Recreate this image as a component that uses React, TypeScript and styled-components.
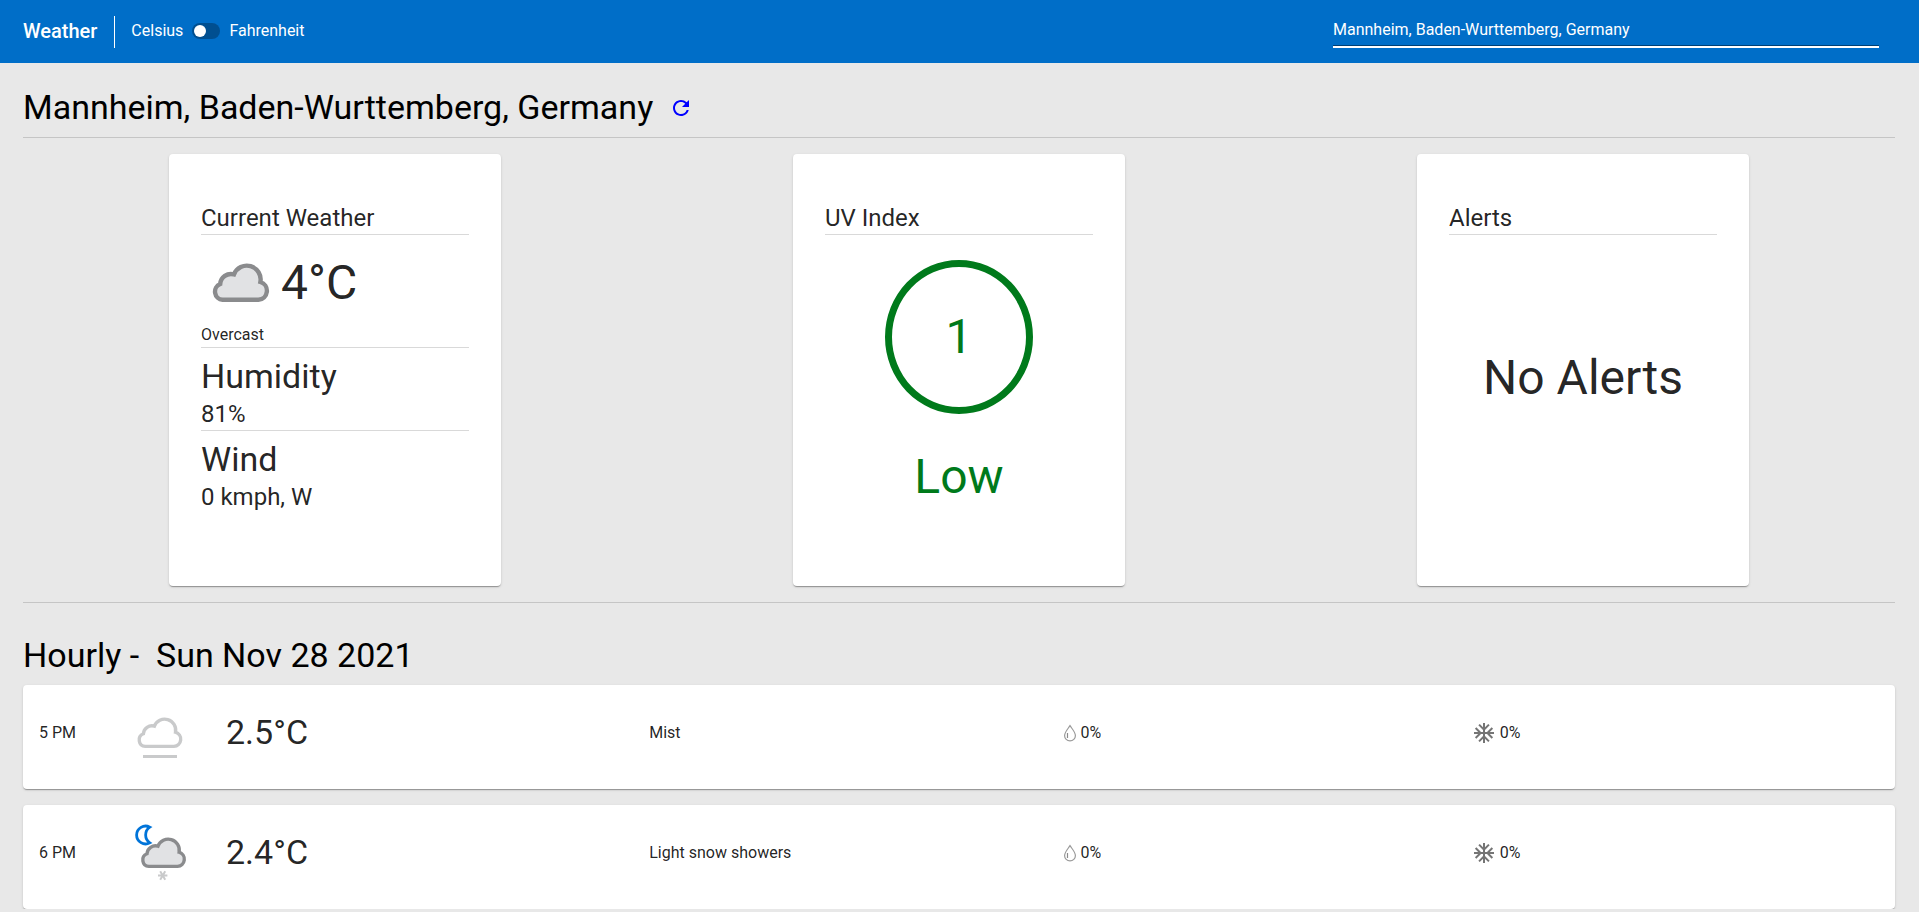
import React, { useState } from "react";
import styled, { createGlobalStyle } from "styled-components";
import { MdAcUnit, MdRefresh } from "react-icons/md";

const GlobalStyle = createGlobalStyle`
  *, *::before, *::after { box-sizing: border-box; }
  body {
    margin: 0;
    background: #e8e8e8;
    color: #000;
    font-family: Roboto, "Liberation Sans", sans-serif;
    font-size: 16px;
    line-height: 24px;
  }
  h1, h2, h3, p { margin: 0; font-weight: 400; }
`;

type TextSize = "small" | "medium" | "large" | "huge";

const textSizes: Record<TextSize, string> = {
  small: "font-size: 16px; line-height: 24px;",
  medium: "font-size: 24px; line-height: 32px;",
  large: "font-size: 34px; line-height: 40px; padding-bottom: 2px;",
  huge: "font-size: 48px; line-height: 56px;",
};

const Text = styled.p<{ $size: TextSize }>`
  ${({ $size }) => textSizes[$size]}
`;

const Header = styled.header`
  display: flex;
  align-items: center;
  height: 63px;
  padding: 0 40px 0 23px;
  background: #006ec8;
  color: #fff;
`;

const Brand = styled.span`
  padding: 0 17px 2px 0;
  border-right: 1px solid #fff;
  font-size: 20px;
  font-weight: 500;
  line-height: 30px;
`;

const UnitSwitch = styled.div`
  display: flex;
  align-items: center;
  gap: 9px;
  margin-left: 16px;
  padding-bottom: 1px;
`;

const Toggle = styled.input`
  appearance: none;
  display: flex;
  width: 28px;
  height: 16px;
  margin: 0;
  padding: 2px;
  border-radius: 8px;
  background: #004f90;
  cursor: pointer;

  &::before {
    content: "";
    width: 12px;
    height: 12px;
    border-radius: 50%;
    background: #fff;
  }
  &:checked { justify-content: flex-end; }
`;

const Search = styled.input`
  width: 546px;
  max-width: 50%;
  height: 32px;
  margin-left: auto;
  padding: 0 0 3px;
  border: 0;
  border-bottom: 2px solid #fff;
  box-shadow: inset 0 -1px 0 #003f74;
  border-radius: 0;
  outline: none;
  background: transparent;
  color: #fff;
  font: inherit;
`;

const Main = styled.main`
  padding: 24px 24px 0 23px;
`;

const PlaceRow = styled.div`
  display: flex;
  align-items: center;
  gap: 16px;
  padding-bottom: 8px;
`;

const Heading = styled.h1`
  ${textSizes.large}
  white-space: pre-wrap;
`;

const RefreshButton = styled.button`
  display: flex;
  padding: 0;
  border: 0;
  background: none;
  color: #0000ff;
  font-size: 24px;
  cursor: pointer;
`;

const Rule = styled.hr`
  height: 1px;
  margin: 0;
  border: 0;
  background: rgba(0, 0, 0, 0.15);
`;

const Surface = styled.section`
  border-radius: 4px;
  background: #fff;
  color: rgba(0, 0, 0, 0.87);
  box-shadow:
    0 2px 1px -1px rgba(0, 0, 0, 0.2),
    0 1px 1px 0 rgba(0, 0, 0, 0.14),
    0 1px 3px 0 rgba(0, 0, 0, 0.12);
`;

const Cards = styled.div`
  display: grid;
  grid-template-columns: repeat(3, 1fr);
  justify-items: center;
  padding: 16px 0;
`;

const Card = styled(Surface)`
  display: flex;
  flex-direction: column;
  width: 332px;
  min-height: 432px;
  padding: 48px 32px 66px;
`;

const CardTitle = styled.h2`
  ${textSizes.medium}
`;

const Conditions = styled.div`
  display: flex;
  align-items: center;
  padding-top: 8px;
`;

const Reading = styled.div`
  padding-top: 8px;
`;

const UvBody = styled.div`
  display: flex;
  flex-direction: column;
  align-items: center;
  gap: 35px;
  padding-top: 25px;
  color: #007a1b;
`;

const Ring = styled.div`
  display: flex;
  align-items: center;
  justify-content: center;
  width: 148px;
  height: 154px;
  border: 7px solid currentColor;
  border-radius: 50%;
`;

const AlertsBody = styled.div`
  display: flex;
  flex: 1;
  align-items: center;
  justify-content: center;
`;

const Hourly = styled.section`
  padding-top: 32px;
`;

const HourList = styled.div`
  display: grid;
  gap: 16px;
  padding-top: 8px;
`;

const HourRow = styled(Surface)`
  display: grid;
  grid-template-columns: 89px 98px 212fr 206fr 206fr 204fr;
  align-items: center;
  padding: 16px 16px 24px;
`;

const Chance = styled.div<{ $gap: number }>`
  display: flex;
  align-items: center;
  gap: ${({ $gap }) => $gap}px;

  svg { color: #757575; }
`;

const Icon = styled.svg`
  display: block;
  flex: none;
`;

const CLOUD =
  "M21.6 56.8A8.2 8.2 0 0 1 19.2 41A10.8 10.8 0 0 1 33 31.4A13.8 13.8 0 0 1 59.4 39A9.1 9.1 0 0 1 57.4 56.8Z";

function OvercastIcon() {
  return (
    <Icon width="80" height="80" viewBox="0 0 80 80" aria-hidden="true">
      <path d={CLOUD} fill="#e1e2e4" stroke="#8a8b8d" strokeWidth="4.4" />
    </Icon>
  );
}

function MistIcon() {
  return (
    <Icon width="64" height="64" viewBox="0 0 64 64" aria-hidden="true">
      <path d={CLOUD} transform="scale(.8)" fill="#fff" stroke="#c9cacb" strokeWidth="4.2" />
      <path d="M15 55.4H49" stroke="#c9cacb" strokeWidth="3" />
    </Icon>
  );
}

function NightSnowIcon() {
  return (
    <Icon width="64" height="64" viewBox="0 0 64 64" aria-hidden="true">
      <path
        d="M21.8 6.2A8.9 8.9 0 1 0 21.8 21.8A9.4 9.4 0 0 1 21.8 6.2Z"
        fill="#fff"
        stroke="#0074d9"
        strokeWidth="2.8"
      />
      <path
        d={CLOUD}
        transform="translate(3.6 0) scale(.8)"
        fill="#e1e2e4"
        stroke="#8a8b8d"
        strokeWidth="4.2"
      />
      <path
        d="M30 54.5H39.4M32.2 50.2L37.2 58.8M37.2 50.2L32.2 58.8"
        stroke="#c9cacb"
        strokeWidth="2"
      />
    </Icon>
  );
}

function DropIcon() {
  return (
    <Icon width="20" height="20" viewBox="0 0 20 20" fill="none" aria-hidden="true">
      <path
        d="M10 2.6C8.2 5.6 4.6 9 4.6 12.7A5.4 5.2 0 0 0 15.4 12.7C15.4 9 11.8 5.6 10 2.6Z"
        stroke="#9a9a9a"
        strokeWidth="1.2"
      />
      <path d="M7.5 10V15" stroke="#8a8a8a" strokeWidth="1.2" />
    </Icon>
  );
}

const hours = [
  { time: "5 PM", icon: <MistIcon />, temp: "2.5°C", text: "Mist", rain: "0%", snow: "0%" },
  { time: "6 PM", icon: <NightSnowIcon />, temp: "2.4°C", text: "Light snow showers", rain: "0%", snow: "0%" },
];

export default function App() {
  const [fahrenheit, setFahrenheit] = useState(false);
  const [place, setPlace] = useState("Mannheim, Baden-Wurttemberg, Germany");

  return (
    <>
      <GlobalStyle />
      <Header>
        <Brand>Weather</Brand>
        <UnitSwitch>
          <label htmlFor="unit">Celsius</label>
          <Toggle
            id="unit"
            type="checkbox"
            checked={fahrenheit}
            onChange={(e) => setFahrenheit(e.target.checked)}
          />
          <label htmlFor="unit">Fahrenheit</label>
        </UnitSwitch>
        <Search
          type="text"
          aria-label="Location"
          value={place}
          onChange={(e) => setPlace(e.target.value)}
        />
      </Header>
      <Main>
        <PlaceRow>
          <Heading>Mannheim, Baden-Wurttemberg, Germany</Heading>
          <RefreshButton type="button" aria-label="Refresh">
            <MdRefresh />
          </RefreshButton>
        </PlaceRow>
        <Rule />
        <Cards>
          <Card>
            <CardTitle>Current Weather</CardTitle>
            <Rule />
            <Conditions>
              <OvercastIcon />
              <Text $size="huge">4°C</Text>
            </Conditions>
            <Text $size="small">Overcast</Text>
            <Rule />
            <Reading>
              <Text $size="large">Humidity</Text>
              <Text $size="medium">81%</Text>
            </Reading>
            <Rule />
            <Reading>
              <Text $size="large">Wind</Text>
              <Text $size="medium">0 kmph, W</Text>
            </Reading>
          </Card>
          <Card>
            <CardTitle>UV Index</CardTitle>
            <Rule />
            <UvBody>
              <Ring>
                <Text $size="huge">1</Text>
              </Ring>
              <Text $size="huge">Low</Text>
            </UvBody>
          </Card>
          <Card>
            <CardTitle>Alerts</CardTitle>
            <Rule />
            <AlertsBody>
              <Text $size="huge">No Alerts</Text>
            </AlertsBody>
          </Card>
        </Cards>
        <Rule />
        <Hourly>
          <Heading as="h2">{"Hourly -  Sun Nov 28 2021"}</Heading>
          <HourList>
            {hours.map((hour) => (
              <HourRow key={hour.time} as="article">
                <Text $size="small">{hour.time}</Text>
                {hour.icon}
                <Text $size="large">{hour.temp}</Text>
                <Text $size="small">{hour.text}</Text>
                <Chance $gap={0}>
                  <DropIcon />
                  <Text $size="small">{hour.rain}</Text>
                </Chance>
                <Chance $gap={4}>
                  <MdAcUnit size={24} />
                  <Text $size="small">{hour.snow}</Text>
                </Chance>
              </HourRow>
            ))}
          </HourList>
        </Hourly>
      </Main>
    </>
  );
}
